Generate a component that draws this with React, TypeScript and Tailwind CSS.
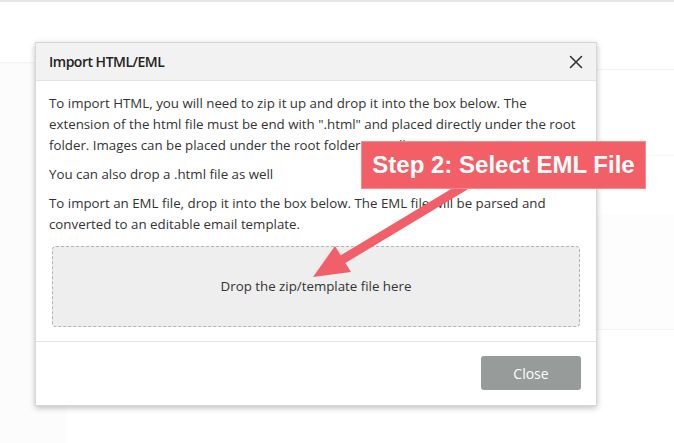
import React from 'react';

function CloseIcon() {
  return (
    <svg width="14" height="14" viewBox="0 0 14 14" className="block">
      <path d="M1.5 1.5 L12.5 12.5 M12.5 1.5 L1.5 12.5" stroke="#333" strokeWidth="1.6" strokeLinecap="round" />
    </svg>
  );
}

export default function App() {
  return (
    <div className="relative w-[674px] h-[443px] overflow-hidden bg-white" style={{ fontFamily: '"Open Sans", "Noto Sans", sans-serif' }}>
      {/* Page behind the dialog */}
      <div className="h-[2px] bg-[#e6e6e6]" />
      <div className="flex h-[441px]">
        <div className="w-[66px] flex flex-col">
          <div className="h-[60px]" />
          <div className="flex-1 bg-[#fcfcfc] border-t border-[#f3f3f3]" />
        </div>
        <div className="flex-1 flex flex-col">
          <div className="h-[68px] border-b border-[#f3f3f3]" />
          <div className="h-[86px] border-b border-[#f5f5f5]" />
          <div className="h-[58px]" />
          <div className="h-[116px] bg-[#fdfdfd] border-b border-[#f3f3f3]" />
          <div className="flex-1" />
        </div>
      </div>

      {/* Dialog */}
      <div className="absolute left-[35px] top-[42px] w-[562px] bg-white border border-[#d6d6d6] shadow-[0_2px_6px_rgba(0,0,0,0.25)]">
        <div className="h-[38px] bg-[#f2f2f2] border-b border-[#e3e3e3] px-[13px] flex items-center justify-between">
          <span className="text-[14px] font-semibold text-[#222] tracking-[-0.5px]">Import HTML/EML</span>
          <CloseIcon />
        </div>
        <div className="px-[13px] pt-[12px] pb-[14px] text-[13.3px] leading-[21px] text-[#333]">
          <p className="mb-[8px]">
            To import HTML, you will need to zip it up and drop it into the box below. The extension of the html file must be end with ".html" and placed directly under the root folder. Images can be placed under the root folder as well.
          </p>
          <p className="mb-[8px]">You can also drop a .html file as well</p>
          <p className="mb-[11px]">
            To import an EML file, drop it into the box below. The EML file will be parsed and converted to an editable email template.
          </p>
          <div className="mx-[3px] h-[81px] bg-[#eeeeee] border border-dashed border-[#b3b3b3] rounded-[4px] flex items-center justify-center">
            <span className="text-[13.3px] text-[#333]">Drop the zip/template file here</span>
          </div>
        </div>
        <div className="border-t border-[#e3e3e3] px-[15px] pt-[14px] pb-[15px] flex justify-end">
          <button className="w-[100px] h-[34px] bg-[#979c9b] rounded-[3px] text-white text-[14px]">Close</button>
        </div>
      </div>

      {/* Annotation arrow */}
      <svg className="absolute left-0 top-0" width="674" height="443" viewBox="0 0 674 443">
        <line x1="468" y1="184" x2="340" y2="261" stroke="#f1606a" strokeWidth="9" />
        <polygon points="313,277 335,246 351,272" fill="#f1606a" />
      </svg>

      {/* Annotation label */}
      <div className="absolute left-[361px] top-[141px] w-[285px] h-[48px] bg-[#f25f67] border border-[#f58a90] flex items-center justify-center">
        <span className="text-white text-[24px] font-bold" style={{ fontFamily: '"Liberation Sans", Arial, sans-serif' }}>Step 2: Select EML File</span>
      </div>
    </div>
  );
}
